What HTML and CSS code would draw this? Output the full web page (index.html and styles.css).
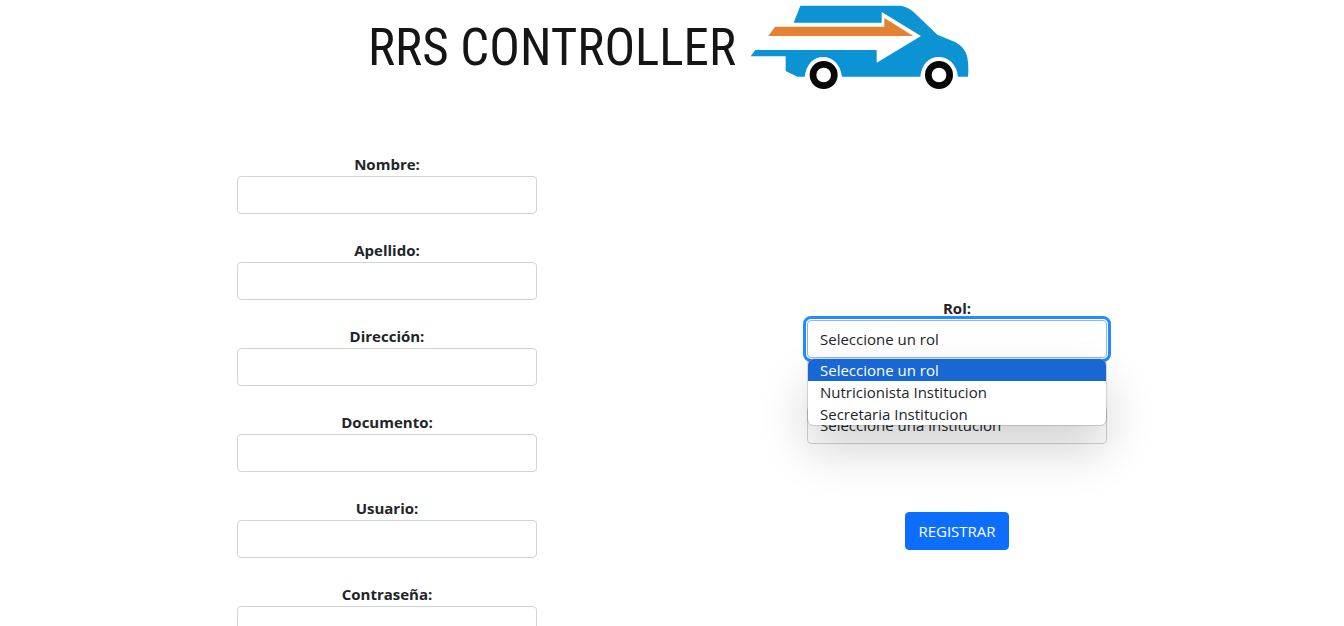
FILE: index.html
```html
<!DOCTYPE html>
<html lang="es">
<head>
<meta charset="utf-8">
<meta name="viewport" content="width=device-width, initial-scale=1">
<title>RRS Controller</title>
<link rel="stylesheet" href="styles.css">
</head>
<body>
<header class="brand">
  <span class="brand-name">RRS CONTROLLER</span>
  <svg class="brand-van" viewBox="0 0 720 300" aria-hidden="true">
    <path fill="#0c93d4" d="M181 17H478Q500 18 520 35L592 104L645 126Q676 142 682 172Q687 200 684 230H654C650 192 625 171 596 171C567 171 545 192 541 230H306C301 192 278 171 249 171C221 171 199 192 194 230H172L137 213V169H32L46 150H410V188L543 108L425 36V68H161Z"/>
    <path fill="#e58231" d="M105 80H433V54L520 108H85Z"/>
    <circle cx="251" cy="225" r="32" fill="#fff" stroke="#080808" stroke-width="20"/>
    <circle cx="597" cy="225" r="32" fill="#fff" stroke="#080808" stroke-width="20"/>
  </svg>
</header>
<main>
  <form class="form">
    <div class="column">
      <div class="field"><label for="nombre">Nombre:</label><input class="control" id="nombre" type="text"></div>
      <div class="field"><label for="apellido">Apellido:</label><input class="control" id="apellido" type="text"></div>
      <div class="field"><label for="direccion">Dirección:</label><input class="control" id="direccion" type="text"></div>
      <div class="field"><label for="documento">Documento:</label><input class="control" id="documento" type="text"></div>
      <div class="field"><label for="usuario">Usuario:</label><input class="control" id="usuario" type="text"></div>
      <div class="field"><label for="clave">Contraseña:</label><input class="control" id="clave" type="password"></div>
    </div>
    <div class="column column-side">
      <div class="field">
        <label for="rol">Rol:</label>
        <select class="control control-active" id="rol">
          <option>Seleccione un rol</option>
          <option>Nutricionista Institucion</option>
          <option>Secretaria Institucion</option>
        </select>
        <ul class="menu">
          <li class="menu-item menu-item-selected">Seleccione un rol</li>
          <li class="menu-item">Nutricionista Institucion</li>
          <li class="menu-item">Secretaria Institucion</li>
        </ul>
      </div>
      <select class="control institution" aria-label="Institución">
        <option>Seleccione una institución</option>
      </select>
      <button class="submit" type="submit">REGISTRAR</button>
    </div>
  </form>
</main>
</body>
</html>
```
FILE: styles.css
```css
* {
  box-sizing: border-box;
}

body {
  margin: 0;
  background: #fff;
  color: #212529;
  font-family: "Segoe UI", "Open Sans", "Noto Sans", sans-serif;
  font-size: 15px;
  line-height: 24px;
}

.brand {
  display: flex;
  justify-content: center;
  align-items: flex-start;
  gap: 4px;
  padding-left: 4px;
}

.brand-name {
  padding-top: 16px;
  color: #151515;
  font-family: "Roboto Condensed", Roboto, sans-serif;
  font-size: 51px;
  line-height: 64px;
  white-space: nowrap;
}

.brand-van {
  width: 240px;
  height: 100px;
}

.form {
  display: grid;
  grid-template-columns: 1fr 1fr;
  max-width: 1140px;
  margin: 0 auto;
  padding-top: 52px;
}

.column {
  display: flex;
  flex-direction: column;
  align-items: center;
  gap: 24px;
}

.column-side {
  gap: 0;
  padding-top: 144px;
}

.field {
  position: relative;
  display: flex;
  flex-direction: column;
  width: 300px;
}

.field label {
  font-weight: 700;
  text-align: center;
}

.control {
  width: 300px;
  height: 38px;
  margin: 0;
  padding: 6px 12px;
  border: 1px solid #ced4da;
  border-radius: 4px;
  background: #fff;
  color: #212529;
  font: inherit;
  appearance: none;
}

.control-active {
  border-color: #86b7fe;
  outline: 3px solid #218bff;
  outline-offset: 1px;
}

.menu {
  position: absolute;
  top: 100%;
  left: 1px;
  right: 1px;
  z-index: 2;
  margin: 1px 0 0;
  padding: 0;
  overflow: hidden;
  border-radius: 6px;
  background: #fff;
  box-shadow: 0 0 1px 1px rgba(0, 0, 0, 0.15), 0 24px 48px rgba(0, 0, 0, 0.18);
  list-style: none;
}

.menu-item {
  padding: 0 12px;
  line-height: 22px;
}

.menu-item-selected {
  background: #1967d2;
  color: #fff;
}

.institution {
  margin-top: 48px;
}

.submit {
  margin-top: 68px;
  padding: 6px 12px;
  border: 1px solid #0d6efd;
  border-radius: 4px;
  background: #0d6efd;
  color: #fff;
  font: inherit;
}
```
